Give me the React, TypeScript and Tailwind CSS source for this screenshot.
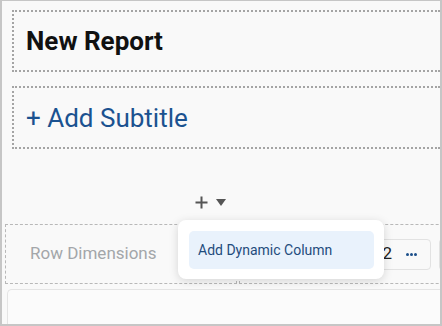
import React from 'react';

export default function App() {
  return (
    <div className="relative w-[442px] h-[326px] overflow-hidden bg-[#f9f9f9] border-l-2 border-r-2 border-b-2 border-t border-[#c6c6c6] font-['Roboto',sans-serif]">
      {/* Title */}
      <div className="ml-[10px] mt-[9px] h-[62px] border-2 border-r-0 border-dotted border-[#a4a4a4] flex items-center pl-[12px]">
        <h1 className="text-[26px] font-bold text-[#111] leading-none">New Report</h1>
      </div>

      {/* Subtitle */}
      <div className="ml-[10px] mt-[14px] h-[63px] border-2 border-r-0 border-dotted border-[#a4a4a4] flex items-center pl-[12px]">
        <span className="text-[26px] text-[#1b5290] leading-none">+ Add Subtitle</span>
      </div>

      {/* Add control */}
      <div className="mt-[45px] flex items-center justify-center gap-[8px] pr-[22px] h-[16px]">
        <svg width="13" height="13" viewBox="0 0 13 13">
          <path d="M6.5 0.5v12M0.5 6.5h12" stroke="#555" strokeWidth="2" />
        </svg>
        <svg width="10" height="7" viewBox="0 0 10 7">
          <path d="M0 0h10L5 7z" fill="#555" />
        </svg>
      </div>

      {/* Row */}
      <div className="mt-[14px] ml-[3px] flex h-[60px]">
        <div className="shrink-0 w-[232px] border border-dashed border-[#b8b8b8] flex items-center pl-[24px]">
          <span className="text-[17px] text-[#a3a6a9]">Row Dimensions</span>
        </div>
        <div className="flex-1 ml-[2px] border border-r-0 border-dashed border-[#b8b8b8] flex items-center pl-[127px] gap-[8px]">
          <div className="shrink-0 h-[31px] w-[64px] rounded-[4px] border border-[#e2e2e2] flex items-center justify-end pr-[13px] gap-[14px]">
            <span className="text-[17px] text-[#222]">2</span>
            <span className="flex gap-[1px]">
              <span className="w-[3px] h-[3px] rounded-full bg-[#1b4f8a]" />
              <span className="w-[3px] h-[3px] rounded-full bg-[#1b4f8a]" />
              <span className="w-[3px] h-[3px] rounded-full bg-[#1b4f8a]" />
            </span>
          </div>
          <div className="shrink-0 h-[31px] w-[40px] rounded-l-[4px] border border-r-0 border-[#e2e2e2]" />
        </div>
      </div>

      {/* Card */}
      <div className="mt-[5px] ml-[5px] h-[60px] bg-[#fbfbfb] rounded-l-[5px] border border-r-0 border-[#e4e4e4]" />

      {/* Menu */}
      <div className="absolute left-[176px] top-[219px] w-[206px] h-[59px] bg-white rounded-[8px] shadow-[0_2px_10px_rgba(0,0,0,0.15)] pt-[11px] pl-[11px] pr-[10px]">
        <div className="h-[38px] rounded-[5px] bg-[#e9f2fc] flex items-center pl-[9px]">
          <span className="text-[14px] text-[#1f4c7c]">Add Dynamic Column</span>
        </div>
      </div>
    </div>
  );
}
